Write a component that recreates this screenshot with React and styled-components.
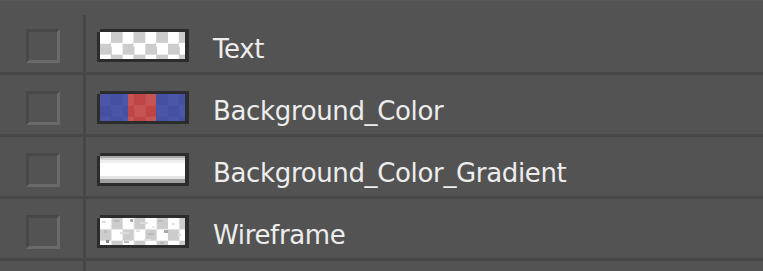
import React from 'react';
import styled, { createGlobalStyle, css } from 'styled-components';

const Global = createGlobalStyle`
  html, body { margin: 0; padding: 0; background: #535353; }
  body { font-family: "DejaVu Sans", Verdana, sans-serif; overflow: hidden; }
`;

const BG = '#535353';
const LINE = '#474747';

const Panel = styled.div`
  width: 763px;
  height: 271px;
  overflow: hidden;
  box-sizing: border-box;
  border-top: 1px solid #595959;
  padding-top: 12px;
  display: flex;
  flex-direction: column;
  background: ${BG};
`;

const Row = styled.div`
  display: flex;
  flex: none;
  height: 59px;
  border-bottom: 3px solid ${LINE};
  ${(p) => p.$stub && css`
    flex: 1;
    height: auto;
    border-bottom: none;
  `}
`;

const LeftCell = styled.div`
  width: 83px;
  flex: none;
  box-sizing: border-box;
  padding: 16px 0 0 26px;
`;

const Divider = styled.div`
  width: 3px;
  flex: none;
  background: ${LINE};
  margin-top: ${(p) => p.$offset || 0}px;
`;

const Content = styled.div`
  flex: 1;
  display: flex;
  align-items: flex-start;
  padding: 16px 0 0 11px;
`;

const Checkbox = styled.div`
  width: 34px;
  height: 34px;
  box-sizing: border-box;
  border: 3px solid;
  border-color: #484848 #6a6a6a #6a6a6a #484848;
`;

const checker = (a, b, size = 22.67) => css`
  background-color: ${b};
  background-image: repeating-conic-gradient(${a} 0 25%, ${b} 0 50%);
  background-size: ${size}px ${size}px;
`;

const Frame = styled.div`
  position: relative;
  flex: none;
  width: 85px;
  height: 27px;
  border: 3px solid #2c2c2c;
  border-right-width: 4px;
  display: flex;
  overflow: visible;
  &::before {
    content: '';
    position: absolute;
    top: -3px;
    left: -3px;
    width: 3px;
    height: 3px;
    background: ${BG};
  }
`;

const Fill = styled.div`
  flex: 1;
  height: 100%;
  display: flex;
  ${(p) => p.$kind === 'checker' && checker('#cccccc', '#ffffff')}
  ${(p) => p.$kind === 'blue' && checker('#4550a0', '#4b56a8')}
  ${(p) => p.$kind === 'gradient' && css`
    background: linear-gradient(
      to bottom,
      #aaaaaa 0, #aaaaaa 2px,
      #d6d6d6 2px, #d6d6d6 4px,
      #efefef 4px, #efefef 7px,
      #ffffff 7px, #ffffff 20.5px,
      #e4e4e4 20.5px, #e4e4e4 23.5px,
      #9f9f9f 23.5px, #9f9f9f 27px
    );
  `}
`;

const RedBand = styled.div`
  margin-left: 27.7px;
  width: 28px;
  height: 100%;
  ${checker('#bf4545', '#c75454')}
  background-position: -27.7px 0;
`;

const Label = styled.span`
  margin: 5px 0 0 24px;
  font-size: 26px;
  line-height: 30px;
  letter-spacing: -0.35px;
  color: #ededed;
  white-space: nowrap;
`;

const WireSvg = styled.svg`
  display: block;
  width: 85px;
  height: 27px;
`;

const specks = [
  [2, 3, 4, 2, '#dddddd'], [14, 2, 6, 2, '#bbbbbb'], [30, 1, 3, 3, '#aaaaaa'],
  [40, 4, 8, 2, '#dedede'], [58, 2, 5, 2, '#bdbdbd'], [72, 5, 3, 2, '#e0e0e0'],
  [4, 12, 3, 3, '#bcbcbc'], [20, 14, 9, 2, '#dcdcdc'], [36, 11, 4, 3, '#e4e4e4'],
  [48, 15, 6, 2, '#b9b9b9'], [64, 12, 4, 3, '#aaaaaa'], [78, 16, 3, 2, '#dddddd'],
  [6, 22, 3, 3, '#888888'], [24, 23, 5, 2, '#bdbdbd'], [44, 21, 7, 2, '#e2e2e2'],
  [60, 24, 4, 2, '#b5b5b5'], [10, 7, 2, 2, '#e6e6e6'], [52, 8, 3, 2, '#e9e9e9'],
];

function Wireframe() {
  return (
    <WireSvg viewBox="0 0 85 27" preserveAspectRatio="none">
      <defs>
        <pattern id="chk" width="22.67" height="22.67" patternUnits="userSpaceOnUse">
          <rect width="22.67" height="22.67" fill="#ffffff" />
          <rect x="11.33" y="0" width="11.34" height="11.33" fill="#cccccc" />
          <rect x="0" y="11.33" width="11.33" height="11.34" fill="#cccccc" />
        </pattern>
      </defs>
      <rect width="85" height="27" fill="url(#chk)" />
      {specks.map(([x, y, w, h, c], i) => (
        <rect key={i} x={x} y={y} width={w} height={h} fill={c} />
      ))}
    </WireSvg>
  );
}

const layers = [
  { name: 'Text', kind: 'checker' },
  { name: 'Background_Color', kind: 'blue' },
  { name: 'Background_Color_Gradient', kind: 'gradient' },
  { name: 'Wireframe', kind: 'wire' },
];

function Thumb({ kind }) {
  return (
    <Frame>
      {kind === 'wire' ? (
        <Wireframe />
      ) : (
        <Fill $kind={kind}>{kind === 'blue' && <RedBand />}</Fill>
      )}
    </Frame>
  );
}

export default function App() {
  return (
    <>
      <Global />
      <Panel>
        {layers.map((l, i) => (
          <Row key={l.name}>
            <LeftCell>
              <Checkbox />
            </LeftCell>
            <Divider $offset={i === 0 ? 2 : 0} />
            <Content>
              <Thumb kind={l.kind} />
              <Label>{l.name}</Label>
            </Content>
          </Row>
        ))}
        <Row $stub>
          <LeftCell />
          <Divider />
        </Row>
      </Panel>
    </>
  );
}
